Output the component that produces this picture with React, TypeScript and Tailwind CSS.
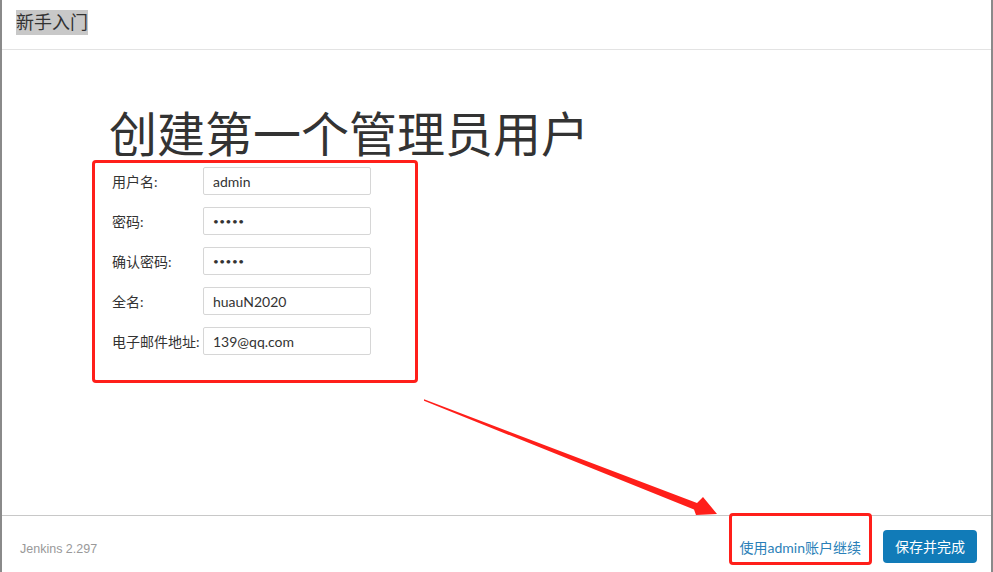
import React from "react";

const rows: { label: string; value: string; secret?: boolean }[] = [
  { label: "用户名:", value: "admin" },
  { label: "密码:", value: "•••••", secret: true },
  { label: "确认密码:", value: "•••••", secret: true },
  { label: "全名:", value: "huauN2020" },
  { label: "电子邮件地址:", value: "139@qq.com" },
];

export default function App() {
  return (
    <div
      className="relative w-[993px] h-[572px] bg-white border-l-2 border-r-2 border-[#8a8a8a] flex flex-col overflow-hidden text-[#333]"
      style={{ fontFamily: "Lato, 'Noto Sans CJK SC', sans-serif" }}
    >
      {/* header */}
      <div className="h-[50px] shrink-0 border-b border-[#e3e3e3] pl-[14px] pt-[10px]">
        <span className="inline-block bg-[#c8c8c8] text-[18px] leading-[25px] text-[#333]">新手入门</span>
      </div>

      {/* main */}
      <div className="flex-1 pl-[90px]">
        <h1 className="mt-[60px] ml-[17px] text-[48px] leading-[48px] font-normal text-[#333]">
          创建第一个管理员用户
        </h1>
        <div className="mt-[2px] w-[326px] border-[3px] border-[#ff1f1a] rounded-[4px] pt-[4px] pb-[25px] pl-[17px] flex flex-col gap-[12px]">
          {rows.map((r) => (
            <div key={r.label} className="flex items-center h-[28px]">
              <div className="w-[91px] text-[14px] text-[#333] whitespace-nowrap">{r.label}</div>
              <input
                readOnly
                value={r.value}
                className={
                  r.secret
                    ? "w-[168px] h-[28px] border border-[#d6d6d6] rounded-[2px] px-[9px] text-[10px] tracking-[0.5px] text-[#333] outline-none bg-white"
                    : "w-[168px] h-[28px] border border-[#d6d6d6] rounded-[2px] px-[9px] text-[14px] text-[#333] outline-none bg-white"
                }
              />
            </div>
          ))}
        </div>
      </div>

      {/* footer */}
      <div className="h-[57px] shrink-0 border-t border-[#c8c8c8] flex items-center justify-between pl-[18px] pr-[14px] pt-[4px]">
        <span className="mt-[6px] text-[12.5px] text-[#999]" style={{ fontFamily: "'Liberation Sans', sans-serif" }}>
          Jenkins 2.297
        </span>
        <div className="flex items-center gap-[22px]">
          <a className="text-[14px] text-[#2a7fb8] mt-[2px] cursor-pointer">使用admin账户继续</a>
          <button className="h-[33px] px-[12px] rounded-[4px] bg-[#117bb8] text-white text-[14px]">保存并完成</button>
        </div>
      </div>

      {/* annotation: red box around link */}
      <div className="absolute left-[727px] top-[513px] w-[143px] h-[52px] border-[3px] border-[#ff1f1a] rounded-[4px] pointer-events-none" />

      {/* annotation: arrow */}
      <svg className="absolute left-0 top-0 pointer-events-none" width="993" height="572" viewBox="0 0 993 572">
        <polygon
          points="424,399.2 697,503 703,497 717,514 696,515 694,509.5 424,400.8"
          transform="translate(-2,0)"
          fill="#ff1f1a"
        />
      </svg>
    </div>
  );
}
